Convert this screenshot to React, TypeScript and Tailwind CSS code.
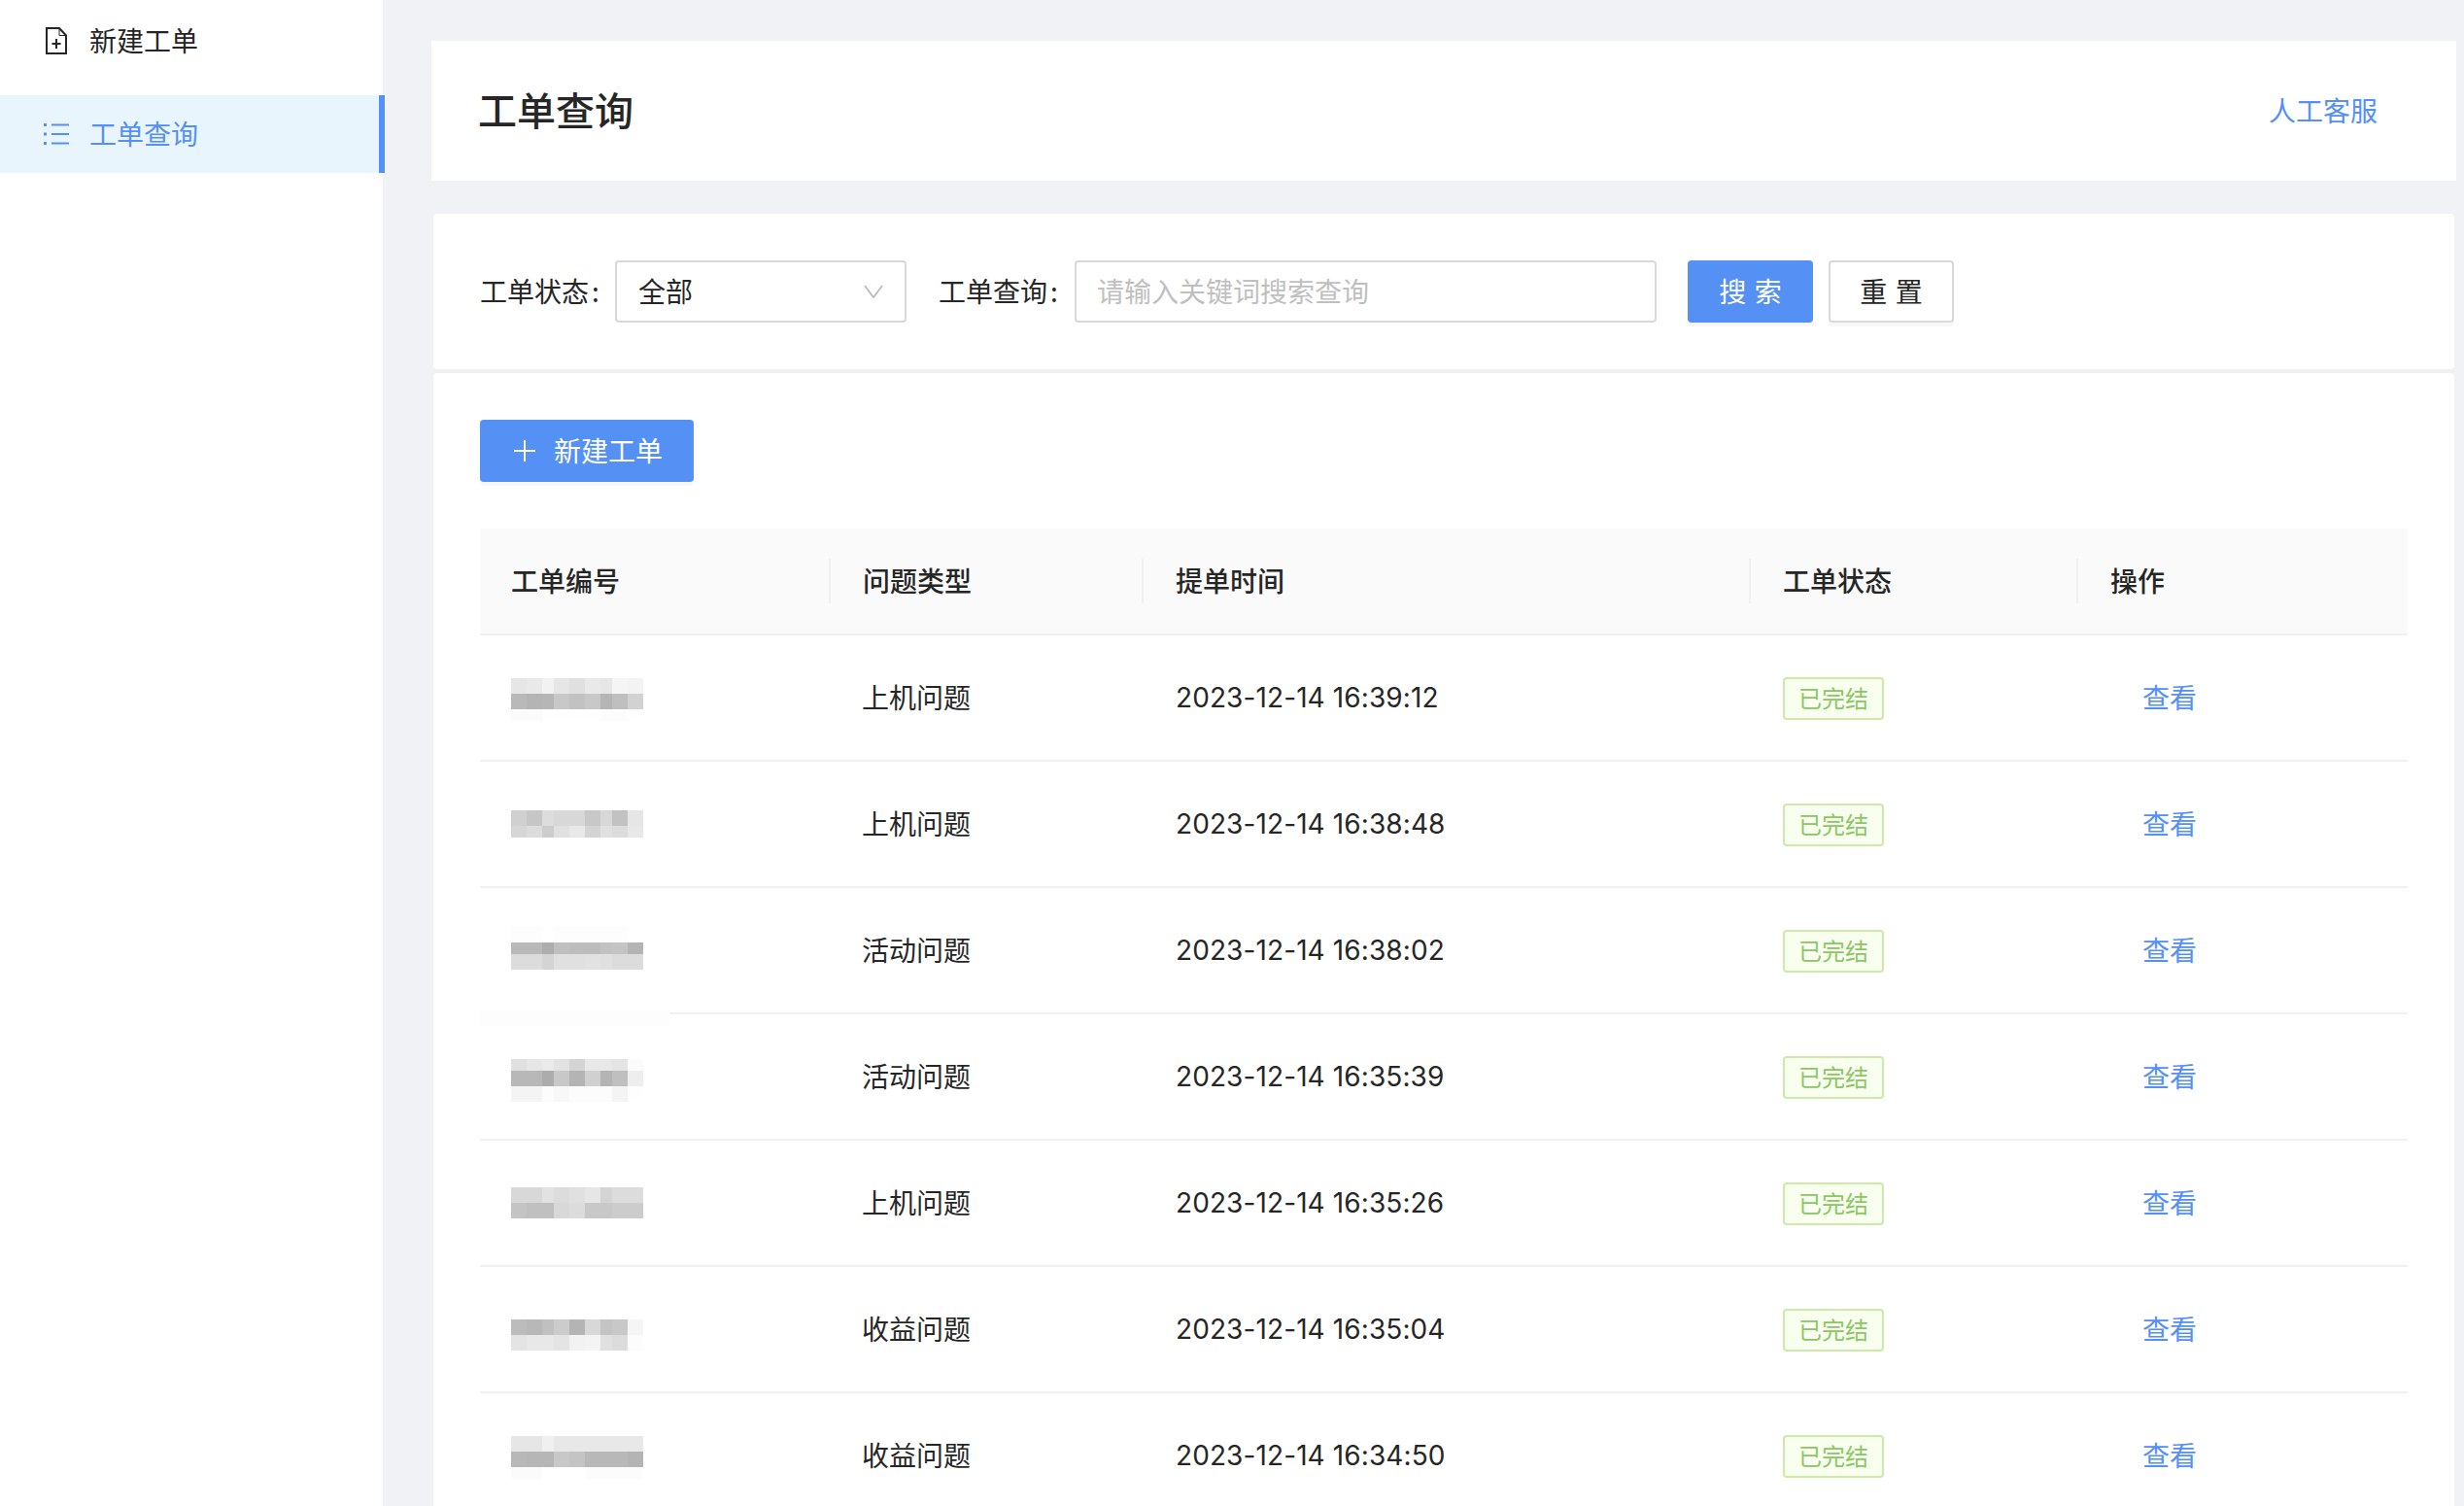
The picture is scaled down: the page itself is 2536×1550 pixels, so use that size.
import React from 'react';

type Ticket = {
  kind: string;
  time: string;
  mosaic: { y: number; h: number; cells: string[] }[];
};

const cols = 'grid grid-cols-[362px_322px_625px_337px_338px]';
const cellWidths = [16, 16, 12, 16, 16, 16, 12, 16, 16];

const tickets: Ticket[] = [
  {
    kind: '上机问题',
    time: '2023-12-14 16:39:12',
    mosaic: [
      { y: 44, h: 16, cells: ['#e6e6e6', '#e9e9e9', '#f2f2f2', '#e6e6e6', '#e0e0e0', '#e9e9e9', '#e6e6e6', '#f5f5f5', '#f3f3f3'] },
      { y: 60, h: 16, cells: ['#b9b9b9', '#b4b4b4', '#b6b6b6', '#c8c8c8', '#c2c2c2', '#c8c8c8', '#b5b5b5', '#bfbfbf', '#d2d2d2'] },
      { y: 76, h: 12, cells: ['#fbfbfb', '#fbfbfb', '#fefefe', '#fefefe', '#fefefe', '#fefefe', '#fcfcfc', '#fcfcfc', '#fefefe'] },
    ],
  },
  {
    kind: '上机问题',
    time: '2023-12-14 16:38:48',
    mosaic: [
      { y: 50, h: 16, cells: ['#d0d0d0', '#c6c6c6', '#dddddd', '#d8d8d8', '#d8d8d8', '#c8c8c8', '#d8d8d8', '#c2c2c2', '#e6e6e6'] },
      { y: 66, h: 12, cells: ['#d6d6d6', '#dcdcdc', '#cccccc', '#e0e0e0', '#e8e8e8', '#d4d4d4', '#e0e0e0', '#dcdcdc', '#e8e8e8'] },
    ],
  },
  {
    kind: '活动问题',
    time: '2023-12-14 16:38:02',
    mosaic: [
      { y: 39, h: 17, cells: ['#fdfdfd', '#fdfdfd', '#ffffff', '#fdfdfd', '#fdfdfd', '#fdfdfd', '#fdfdfd', '#fdfdfd', '#ffffff'] },
      { y: 56, h: 12, cells: ['#b9b9b9', '#b9b9b9', '#adadad', '#bfbfbf', '#bdbdbd', '#bdbdbd', '#c2c2c2', '#c4c4c4', '#b4b4b4'] },
      { y: 68, h: 16, cells: ['#dcdcdc', '#dcdcdc', '#d4d4d4', '#e0e0e0', '#e0e0e0', '#e2e2e2', '#e0e0e0', '#dcdcdc', '#dcdcdc'] },
    ],
  },
  {
    kind: '活动问题',
    time: '2023-12-14 16:35:39',
    mosaic: [
      { y: 46, h: 12, cells: ['#e0e0e0', '#e6e6e6', '#eaeaea', '#e2e2e2', '#d4d4d4', '#e8e8e8', '#e8e8e8', '#e4e4e4', '#fbfbfb'] },
      { y: 58, h: 16, cells: ['#b8b8b8', '#b8b8b8', '#acacac', '#c8c8c8', '#b4b4b4', '#d0d0d0', '#b4b4b4', '#bfbfbf', '#eeeeee'] },
      { y: 74, h: 16, cells: ['#f4f4f4', '#f4f4f4', '#fcfcfc', '#f8f8f8', '#fcfcfc', '#fcfcfc', '#fcfcfc', '#f4f4f4', '#fefefe'] },
    ],
  },
  {
    kind: '上机问题',
    time: '2023-12-14 16:35:26',
    mosaic: [
      { y: 48, h: 16, cells: ['#d8d8d8', '#d8d8d8', '#e2e2e2', '#dcdcdc', '#e0e0e0', '#e6e6e6', '#d4d4d4', '#dcdcdc', '#dcdcdc'] },
      { y: 64, h: 16, cells: ['#c4c4c4', '#c0c0c0', '#c0c0c0', '#d8d8d8', '#dcdcdc', '#c8c8c8', '#c8c8c8', '#cccccc', '#cccccc'] },
    ],
  },
  {
    kind: '收益问题',
    time: '2023-12-14 16:35:04',
    mosaic: [
      { y: 54, h: 16, cells: ['#bcbcbc', '#b8b8b8', '#c0c0c0', '#cccccc', '#b4b4b4', '#d8d8d8', '#c4c4c4', '#c8c8c8', '#f5f5f5'] },
      { y: 70, h: 16, cells: ['#e4e4e4', '#e8e8e8', '#e8e8e8', '#e4e4e4', '#f2f2f2', '#f4f4f4', '#e0e0e0', '#dcdcdc', '#fcfcfc'] },
    ],
  },
  {
    kind: '收益问题',
    time: '2023-12-14 16:34:50',
    mosaic: [
      { y: 44, h: 16, cells: ['#e6e6e6', '#e6e6e6', '#f0f0f0', '#e8e8e8', '#e8e8e8', '#e8e8e8', '#e8e8e8', '#e8e8e8', '#e8e8e8'] },
      { y: 60, h: 16, cells: ['#b8b8b8', '#b6b6b6', '#b6b6b6', '#c8c8c8', '#c4c4c4', '#b8b8b8', '#b8b8b8', '#b8b8b8', '#b4b4b4'] },
      { y: 76, h: 12, cells: ['#fbfbfb', '#fbfbfb', '#ffffff', '#ffffff', '#ffffff', '#fcfcfc', '#fcfcfc', '#fcfcfc', '#fcfcfc'] },
    ],
  },
];

const Mosaic = ({ rows }: { rows: Ticket['mosaic'] }) => (
  <svg width="136" height="128" className="block">
    {rows.map((row) => {
      let x = 0;
      return row.cells.map((fill, i) => {
        const rect = <rect key={`${row.y}-${i}`} x={x} y={row.y} width={cellWidths[i]} height={row.h} fill={fill} />;
        x += cellWidths[i];
        return rect;
      });
    })}
  </svg>
);

const FileAddIcon = () => (
  <svg width="22" height="28" viewBox="0 0 22 28" fill="none" stroke="#262626" strokeWidth="2">
    <path d="M1 1h13l7 7.5V27H1z" />
    <path d="M14 1v7.5h7" strokeWidth="1" />
    <path d="M11 12v10M6.5 17h9" />
  </svg>
);

const ListIcon = () => (
  <svg width="26" height="22" viewBox="0 0 26 22" fill="none" stroke="#5590f5" strokeWidth="2">
    <path d="M8 1.5h18M8 11h18M8 20.5h18" />
    <path d="M0 1.5h3M0 11h3M0 20.5h3" strokeWidth="3" />
  </svg>
);

const HeaderCell = ({ label, divider = true }: { label: string; divider?: boolean }) => (
  <div className="flex h-full items-center justify-between">
    <span className="mb-[3px] pl-8 font-medium">{label}</span>
    {divider && <span className="mr-[1px] h-[46px] w-[2px] bg-[#f0f0f0]" />}
  </div>
);

export default function App() {
  return (
    <div className="flex h-[1550px] overflow-hidden bg-[#f0f2f5] text-[28px] text-[#262626] font-['Noto_Sans_CJK_SC',sans-serif]">
      <aside className="w-[394px] shrink-0 bg-white pt-[2px]">
        <div className="flex h-20 items-center gap-[23px] pl-[47px]">
          <FileAddIcon />
          <span className="mb-[3px]">新建工单</span>
        </div>
        <div className="mt-4 flex h-20 w-[396px] items-center gap-[21px] border-r-[6px] border-[#5590f5] bg-[#e9f5fd] pl-[45px] text-[#5590f5]">
          <ListIcon />
          <span className="mb-[3px]">工单查询</span>
        </div>
      </aside>

      <main className="min-w-0 flex-1 pl-[50px] pr-2 pt-[42px]">
        <header className="flex h-[144px] items-center justify-between bg-white pl-12 pr-[81px]">
          <h1 className="mb-1 text-[40px] font-medium">工单查询</h1>
          <a className="mb-[3px] text-[#5590f5]">人工客服</a>
        </header>

        <div className="mx-[2px] mt-[34px] flex flex-col gap-1 bg-[#f0f0f0]">
          <section className="flex h-40 items-center rounded bg-white pl-12">
            <label className="mb-[3px] w-[139px]">工单状态<span className="ml-[3px]">:</span></label>
            <div className="flex h-16 w-[300px] items-center justify-between rounded border-2 border-[#d9d9d9] pl-[22px] pr-[22px]">
              <span className="mb-[3px]">全部</span>
              <svg width="20" height="14" viewBox="0 0 20 14" fill="none" stroke="#bfbfbf" strokeWidth="2">
                <path d="M1 1l9 12 9-12" />
              </svg>
            </div>
            <label className="mb-[3px] ml-[33px] w-[140px]">工单查询<span className="ml-[3px]">:</span></label>
            <div className="flex h-16 w-[599px] items-center rounded border-2 border-[#d9d9d9] pl-[21px] text-[#bfbfbf]">
              <span className="mb-[3px]">请输入关键词搜索查询</span>
            </div>
            <button className="ml-8 h-16 w-[129px] rounded bg-[#5590f5] pb-[3px] text-white shadow-[0_4px_0_rgba(0,0,0,0.03)] [word-spacing:2px]">
              搜 索
            </button>
            <button className="ml-4 h-16 w-[129px] rounded border-2 border-[#d9d9d9] bg-white pb-[3px] shadow-[0_4px_0_rgba(0,0,0,0.03)] [word-spacing:2px]">
              重 置
            </button>
          </section>

          <section className="rounded bg-white px-12 pt-12">
            <button className="flex h-16 w-[220px] items-center gap-[19px] rounded bg-[#5590f5] pl-[35px] text-white shadow-[0_4px_0_rgba(0,0,0,0.03)]">
              <svg width="22" height="22" viewBox="0 0 22 22" fill="none" stroke="#ffffff" strokeWidth="2">
                <path d="M11 0v22M0 11h22" />
              </svg>
              <span className="mb-[3px]">新建工单</span>
            </button>

            <div className="mt-12">
              <div className={`${cols} h-[110px] border-b-2 border-[#f0f0f0] bg-[#fafafa]`}>
                <HeaderCell label="工单编号" />
                <HeaderCell label="问题类型" />
                <HeaderCell label="提单时间" />
                <HeaderCell label="工单状态" />
                <HeaderCell label="操作" divider={false} />
              </div>
              {tickets.map((t, i) => (
                <div key={t.time} className={`${cols} relative h-[130px] items-center border-b-2 border-[#f0f0f0]`}>
                  <div className="pl-8">
                    <Mosaic rows={t.mosaic} />
                  </div>
                  <div className="pb-[3px] pl-[31px]">{t.kind}</div>
                  <div className="pb-[1px] pl-8 font-['Inter',sans-serif] tracking-[0.1px]">{t.time}</div>
                  <div className="pl-8">
                    <span className="inline-flex h-11 w-[104px] items-center justify-center rounded border-2 border-[#cdeaa6] bg-[#f9ffef] pb-[3px] text-2xl text-[#8cc665]">
                      已完结
                    </span>
                  </div>
                  <a className="pb-[3px] pl-[65px] text-[#5590f5]">查看</a>
                  {i === 2 && (
                    <div className="absolute bottom-[-14px] left-0 h-[16px] w-[195px] bg-[#fdfdfd]" />
                  )}
                </div>
              ))}
            </div>
          </section>
        </div>
      </main>
    </div>
  );
}
